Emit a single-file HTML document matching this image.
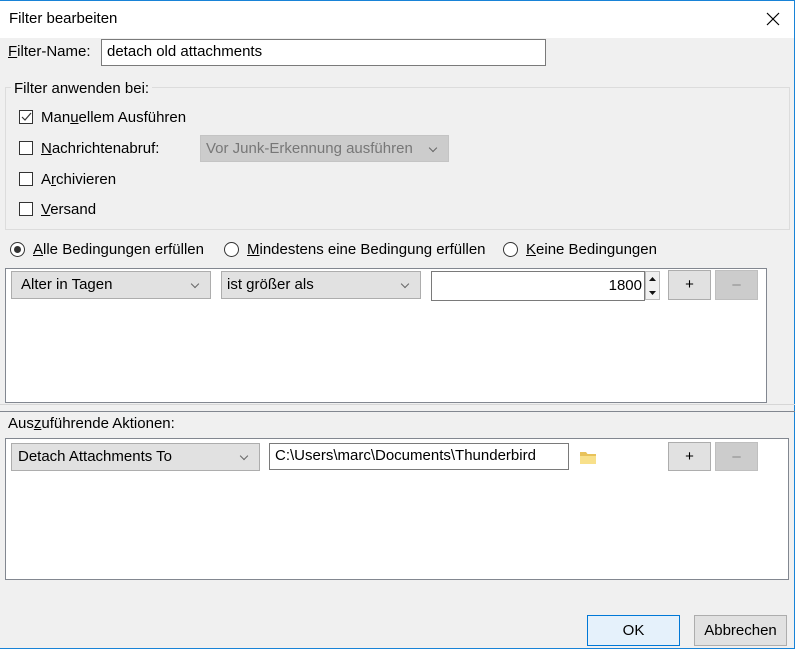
<!DOCTYPE html>
<html><head><meta charset="utf-8"><style>
*{box-sizing:border-box;margin:0;padding:0}
body{width:795px;height:652px;overflow:hidden;background:#f0f0f0;font-family:"Liberation Sans",sans-serif;font-size:15px;color:#000;position:relative}
.a{position:absolute}
.t{position:absolute;white-space:nowrap;line-height:16px}
u{text-decoration:underline}
.sel{position:absolute;background:#e1e1e1;border:1px solid #adadad;padding-left:9px;line-height:26px}
.sel::after{content:"";position:absolute;right:12px;top:9px;width:5px;height:5px;border-right:1px solid #666;border-bottom:1px solid #666;transform:rotate(45deg)}
.inp{position:absolute;background:#fff;border:1px solid #7a7a7a;padding-left:5px;line-height:24px}
.cb{position:absolute;width:14px;height:14px;border:1px solid #333;background:#fff}
.rb{position:absolute;width:15px;height:15px;border:1px solid #333;border-radius:50%;background:#fff}
.btn{position:absolute;background:#e1e1e1;border:1px solid #adadad;text-align:center;line-height:27px}
.btn.d{background:#cccccc;border-color:#bfbfbf;color:#888}
</style></head><body>
<div class="a" style="left:0;top:0;width:795px;height:38px;background:#fff;border-top:1px solid #1883d7"></div>
<div class="a" style="right:0;top:0;width:1px;height:648px;background:#1883d7"></div>
<div class="t" style="left:9px;top:11px">Filter bearbeiten</div>
<svg class="a" style="left:766px;top:12px" width="14" height="14"><path d="M1 1L13 13M13 1L1 13" stroke="#000" stroke-width="1.2"/></svg>

<div class="t" style="left:8px;top:44px"><u>F</u>ilter-Name:</div>
<div class="inp" style="left:101px;top:39px;width:445px;height:27px">detach old attachments</div>

<div class="a" style="left:5px;top:87px;width:785px;height:143px;border:1px solid #dcdcdc"></div>
<div class="t" style="left:11px;top:81px;background:#f0f0f0;padding:0 3px">Filter anwenden bei:</div>
<div class="cb" style="left:19px;top:110px"></div>
<svg class="a" style="left:21px;top:112px" width="11" height="10"><path d="M1 5L4 8L10 1" stroke="#333" stroke-width="1.2" fill="none"/></svg>
<div class="t" style="left:41px;top:110px">Man<u>u</u>ellem Ausführen</div>
<div class="cb" style="left:19px;top:141px"></div>
<div class="t" style="left:41px;top:141px"><u>N</u>achrichtenabruf:</div>
<div class="sel" style="left:200px;top:135px;width:249px;height:27px;background:#cccccc;border-color:#c4c4c4;color:#777;padding-left:5px">Vor Junk-Erkennung ausführen</div>
<div class="cb" style="left:19px;top:172px"></div>
<div class="t" style="left:41px;top:172px">A<u>r</u>chivieren</div>
<div class="cb" style="left:19px;top:202px"></div>
<div class="t" style="left:41px;top:202px"><u>V</u>ersand</div>

<div class="rb" style="left:10px;top:242px"></div><div class="a" style="left:14px;top:246px;width:7px;height:7px;border-radius:50%;background:#333"></div>
<div class="t" style="left:33px;top:242px"><u>A</u>lle Bedingungen erfüllen</div>
<div class="rb" style="left:224px;top:242px"></div>
<div class="t" style="left:247px;top:242px"><u>M</u>indestens eine Bedingung erfüllen</div>
<div class="rb" style="left:503px;top:242px"></div>
<div class="t" style="left:526px;top:242px"><u>K</u>eine Bedingungen</div>

<div class="a" style="left:5px;top:268px;width:762px;height:135px;background:#fff;border:1px solid #828790"></div>
<div class="sel" style="left:11px;top:271px;width:200px;height:28px">Alter in Tagen</div>
<div class="sel" style="left:221px;top:271px;width:200px;height:28px;padding-left:5px">ist größer als</div>
<div class="inp" style="left:431px;top:271px;width:214px;height:30px;text-align:right;padding-right:2px;line-height:28px">1800</div>
<div class="a" style="left:645px;top:271px;width:15px;height:29px;background:#f0f0f0;border:1px solid #bbb"></div>
<svg class="a" style="left:647px;top:274px" width="11" height="24"><path d="M2 7L5.5 3L9 7Z M2 17L5.5 21L9 17Z" fill="#111"/></svg>
<div class="btn" style="left:668px;top:270px;width:43px;height:30px">+</div>
<div class="btn d" style="left:715px;top:270px;width:43px;height:30px">–</div>

<div class="a" style="left:0;top:404px;width:795px;height:1px;background:#d6d6d6"></div>
<div class="a" style="left:0;top:411px;width:795px;height:1px;background:#828790"></div>
<div class="t" style="left:8px;top:416px">Aus<u>z</u>uführende Aktionen:</div>

<div class="a" style="left:5px;top:438px;width:784px;height:142px;background:#fff;border:1px solid #828790"></div>
<div class="sel" style="left:11px;top:443px;width:249px;height:28px;padding-left:6px">Detach Attachments To</div>
<div class="inp" style="left:269px;top:443px;width:300px;height:27px;padding-left:5px">C:\Users\marc\Documents\Thunderbird</div>
<svg class="a" style="left:579px;top:450px" width="18" height="15"><path d="M1 2H7L8.5 4H17V14H1Z" fill="#e8c25a"/><path d="M1 6H17V14H1Z" fill="#f8e08a"/></svg>
<div class="btn" style="left:668px;top:442px;width:43px;height:29px">+</div>
<div class="btn d" style="left:715px;top:442px;width:43px;height:29px">–</div>

<div class="btn" style="left:587px;top:615px;width:93px;height:31px;background:#e5f1fb;border-color:#0078d7;line-height:29px">OK</div>
<div class="btn" style="left:694px;top:615px;width:93px;height:31px;line-height:29px">Abbrechen</div>

<div class="a" style="left:0;top:648px;width:795px;height:1px;background:#1883d7"></div>
<div class="a" style="left:0;top:649px;width:795px;height:3px;background:#fff"></div>
</body></html>
